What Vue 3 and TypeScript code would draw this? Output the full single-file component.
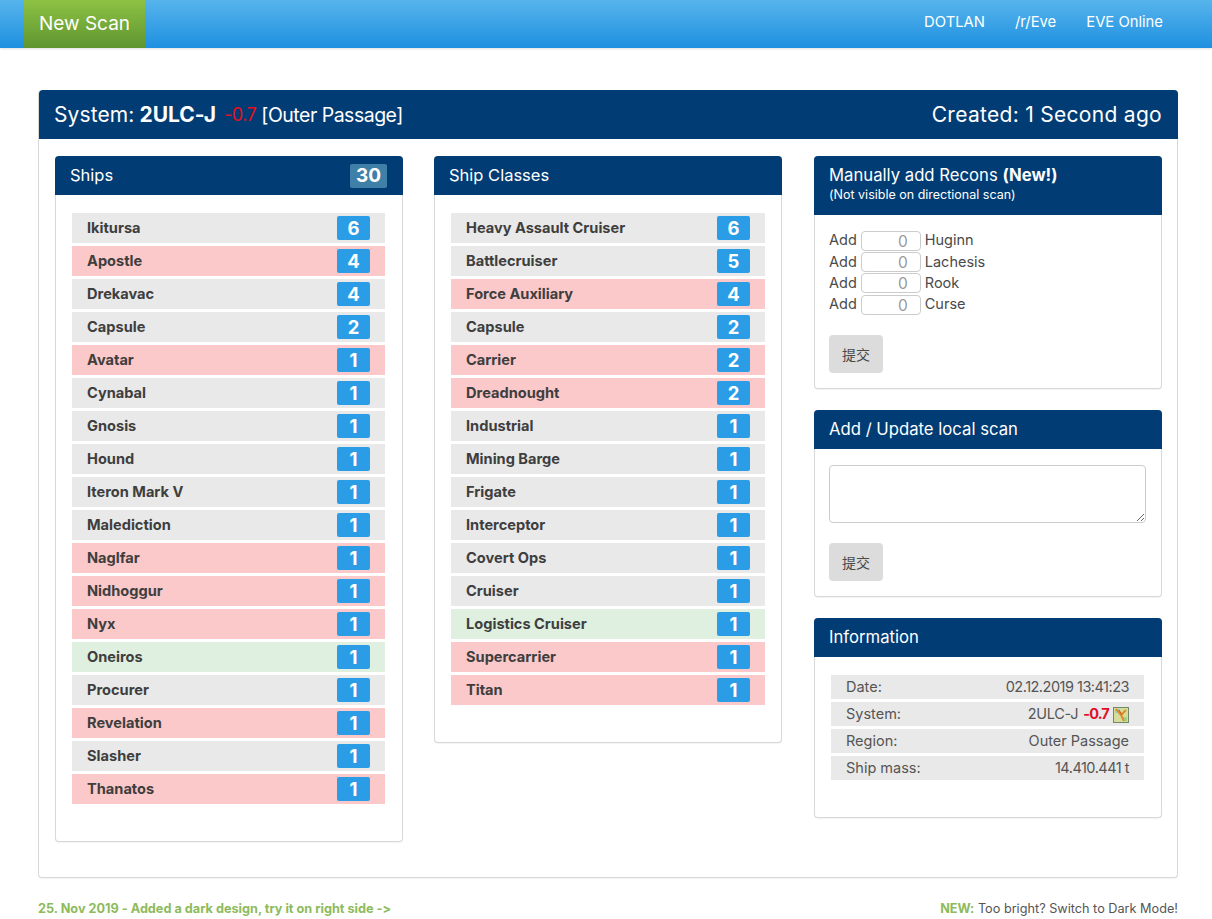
<script setup lang="ts">
type Row = { name: string; count: number; tone?: 'red' | 'green' }

const ships: Row[] = [
  { name: 'Ikitursa', count: 6 },
  { name: 'Apostle', count: 4, tone: 'red' },
  { name: 'Drekavac', count: 4 },
  { name: 'Capsule', count: 2 },
  { name: 'Avatar', count: 1, tone: 'red' },
  { name: 'Cynabal', count: 1 },
  { name: 'Gnosis', count: 1 },
  { name: 'Hound', count: 1 },
  { name: 'Iteron Mark V', count: 1 },
  { name: 'Malediction', count: 1 },
  { name: 'Naglfar', count: 1, tone: 'red' },
  { name: 'Nidhoggur', count: 1, tone: 'red' },
  { name: 'Nyx', count: 1, tone: 'red' },
  { name: 'Oneiros', count: 1, tone: 'green' },
  { name: 'Procurer', count: 1 },
  { name: 'Revelation', count: 1, tone: 'red' },
  { name: 'Slasher', count: 1 },
  { name: 'Thanatos', count: 1, tone: 'red' },
]

const classes: Row[] = [
  { name: 'Heavy Assault Cruiser', count: 6 },
  { name: 'Battlecruiser', count: 5 },
  { name: 'Force Auxiliary', count: 4, tone: 'red' },
  { name: 'Capsule', count: 2 },
  { name: 'Carrier', count: 2, tone: 'red' },
  { name: 'Dreadnought', count: 2, tone: 'red' },
  { name: 'Industrial', count: 1 },
  { name: 'Mining Barge', count: 1 },
  { name: 'Frigate', count: 1 },
  { name: 'Interceptor', count: 1 },
  { name: 'Covert Ops', count: 1 },
  { name: 'Cruiser', count: 1 },
  { name: 'Logistics Cruiser', count: 1, tone: 'green' },
  { name: 'Supercarrier', count: 1, tone: 'red' },
  { name: 'Titan', count: 1, tone: 'red' },
]

const recons = ['Huginn', 'Lachesis', 'Rook', 'Curse']
const navLinks = ['DOTLAN', '/r/Eve', 'EVE Online']
</script>

<template>
  <div class="page">
    <nav class="navbar">
      <a class="new-scan">New Scan</a>
      <div class="nav-links">
        <a v-for="l in navLinks" :key="l">{{ l }}</a>
      </div>
    </nav>

    <section class="main">
      <header class="main-head">
        <div class="title">
          <span class="t-sys">System:</span>
          <b>2ULC-J</b>
          <span class="t-sec">-0.7</span>
          <span class="t-region">[Outer Passage]</span>
        </div>
        <div class="created">Created: 1 Second ago</div>
      </header>

      <div class="columns">
        <div class="panel ships">
          <div class="panel-head">
            <span>Ships</span>
            <span class="total">30</span>
          </div>
          <ul class="list">
            <li v-for="r in ships" :key="r.name" :class="r.tone">
              <span>{{ r.name }}</span>
              <span class="badge">{{ r.count }}</span>
            </li>
          </ul>
        </div>

        <div class="panel classes">
          <div class="panel-head">
            <span>Ship Classes</span>
          </div>
          <ul class="list">
            <li v-for="r in classes" :key="r.name" :class="r.tone">
              <span>{{ r.name }}</span>
              <span class="badge">{{ r.count }}</span>
            </li>
          </ul>
        </div>

        <div class="side">
          <div class="panel">
            <div class="panel-head tall">
              <div>Manually add Recons <b>(New!)</b></div>
              <small>(Not visible on directional scan)</small>
            </div>
            <div class="recon-body">
              <div class="recon-rows">
                <div v-for="r in recons" :key="r" class="recon">
                  <span>Add</span>
                  <input class="num" placeholder="0" />
                  <span>{{ r }}</span>
                </div>
              </div>
              <button class="submit">提交</button>
            </div>
          </div>

          <div class="panel">
            <div class="panel-head">
              <span>Add / Update local scan</span>
            </div>
            <div class="local-body">
              <textarea class="area"></textarea>
              <button class="submit">提交</button>
            </div>
          </div>

          <div class="panel">
            <div class="panel-head">
              <span>Information</span>
            </div>
            <div class="info-body">
              <div class="info"><span>Date:</span><span class="digits">02.12.2019 13:41:23</span></div>
              <div class="info">
                <span>System:</span>
                <span class="sys"><span class="sys-name">2ULC-J</span> <b class="sec">-0.7</b>
                  <svg class="map" width="16" height="16" viewBox="0 0 16 16">
                    <rect x="0.5" y="0.5" width="15" height="15" fill="#d8dc9a" stroke="#6f8a6a" />
                    <path d="M2 2h5v4H2z" fill="#9ecbd8" />
                    <path d="M10 10h4v4h-4z" fill="#a7cf8a" />
                    <path d="M3 2l5 6 3 6M8 8l5-5" stroke="#d9902a" stroke-width="2" fill="none" />
                    <path d="M6 3l3 5" stroke="#c8502c" stroke-width="1" fill="none" />
                  </svg>
                </span>
              </div>
              <div class="info"><span>Region:</span><span>Outer Passage</span></div>
              <div class="info"><span>Ship mass:</span><span class="digits">14.410.441 t</span></div>
            </div>
          </div>
        </div>
      </div>
    </section>

    <footer class="foot">
      <span class="foot-left">25. Nov 2019 - Added a dark design, try it on right side -&gt;</span>
      <span class="foot-right"><b>NEW:</b> Too bright? Switch to Dark Mode!</span>
    </footer>
  </div>
</template>

<style>
html, body { background: #fff; }
</style>

<style scoped>
.page {
  font-family: "Inter", "Noto Sans CJK SC", sans-serif;
  font-feature-settings: "calt" 0;
  color: #4a4a4a;
  font-size: 15px;
  height: 919px;
  overflow: hidden;
}
.navbar {
  height: 48px;
  display: flex;
  justify-content: space-between;
  padding: 0 49px 0 24px;
  background: linear-gradient(#57b4ec, #1e90e0);
  box-shadow: 0 1px 2px rgba(0,0,0,.12);
}
.new-scan {
  width: 121px;
  display: flex;
  align-items: center;
  justify-content: center;
  padding-bottom: 2px;
  box-sizing: border-box;
  color: #fff;
  font-size: 19px;
  background: linear-gradient(#8dc244, #5f9530);
}
.nav-links { display: flex; align-items: center; gap: 30px; padding-bottom: 4px; color: #fff; font-size: 14.8px; }
.main {
  margin: 42px 34px 0 38px;
  height: 788px;
  box-sizing: border-box;
  border: 1px solid #d8d8d8;
  border-top: 0;
  border-radius: 4px;
  box-shadow: 0 1px 1px rgba(0,0,0,.05);
}
.main-head {
  height: 49px;
  margin: 0 -1px 0 0;
  padding: 0 16px 0 15px;
  display: flex;
  align-items: center;
  justify-content: space-between;
  background: #023c74;
  color: #fff;
  font-size: 21px;
  border-radius: 4px 4px 0 0;
}
.title { display: flex; align-items: center; }
.title b { font-weight: 700; margin-left: 5px; }
.t-sys { letter-spacing: .1px; }
.t-sec { color: #e2101f; font-size: 18px; letter-spacing: -.5px; margin-left: 8px; }
.t-region { font-size: 19.5px; letter-spacing: -.5px; margin-left: 5px; }
.created { letter-spacing: .3px; }
.sec { color: #e0102a; }
.columns {
  display: grid;
  grid-template-columns: 379px 380px 348px;
  padding: 17px 16px 0;
  align-items: start;
}
.panel {
  border: 1px solid #d8d8d8;
  border-top: 0;
  border-radius: 4px;
  box-shadow: 0 1px 1px rgba(0,0,0,.05);
  background: #fff;
  box-sizing: border-box;
}
.ships, .classes { width: 348px; }
.panel-head {
  height: 39px;
  margin: 0 -1px;
  padding: 0 16px 0 15px;
  display: flex;
  align-items: center;
  justify-content: space-between;
  background: #023c74;
  color: #fff;
  font-size: 16.5px;
  border-radius: 4px 4px 0 0;
}
.panel-head > span:first-child { margin-bottom: 2px; }
.side .panel-head { font-size: 16.7px; }
.panel-head.tall {
  height: 59px;
  padding-bottom: 4px;
  box-sizing: border-box;
  flex-direction: column;
  align-items: flex-start;
  justify-content: center;
  gap: 2px;
}
.panel-head small { font-size: 12.5px; }
.total {
  width: 37px;
  height: 24px;
  display: flex;
  align-items: center;
  justify-content: center;
  background: #3f80a8;
  font-weight: 700;
  font-size: 19px;
  border-radius: 2px;
}
.ships { height: 686px; }
.classes { height: 587px; }
.list {
  list-style: none;
  margin: 0;
  padding: 18px 17px 0 16px;
  display: flex;
  flex-direction: column;
  gap: 3px;
}
.classes .list { padding-right: 16px; }
.list li {
  height: 30px;
  padding: 0 15px;
  display: flex;
  align-items: center;
  justify-content: space-between;
  background: #e9e9e9;
  font-weight: 700;
  font-size: 14.6px;
  color: #3e3e3e;
}
.list li > span:first-child { margin-bottom: 1px; }
.list li.red { background: #fbc9c9; }
.list li.green { background: #dff0e0; }
.badge {
  width: 33px;
  height: 24px;
  display: flex;
  align-items: center;
  justify-content: center;
  background: #2a9de6;
  color: #fff;
  font-size: 18.5px;
  font-weight: 700;
  border-radius: 2px;
}
.side { display: flex; flex-direction: column; gap: 21px; }
.recon-body { padding: 15px 15px 15px 14px; height: 173px; box-sizing: border-box; }
.recon-rows { display: flex; flex-direction: column; }
.recon { height: 21.4px; display: flex; align-items: center; gap: 4px; font-size: 14.5px; }
.recon > span { margin-bottom: 2px; }
.num {
  width: 60px;
  height: 20px;
  box-sizing: border-box;
  border: 1px solid #ccc;
  border-radius: 4px;
  text-align: right;
  font: inherit;
  font-size: 15.5px;
  padding: 1px 12px 0 0;
  background: #fff;
}
.num::placeholder { color: #999; }
.submit {
  display: block;
  margin-top: 19.4px;
  width: 54px;
  height: 38px;
  border: 0;
  border-radius: 4px;
  background: #dcdcdc;
  color: #4a4a4a;
  font: 14px "Noto Sans CJK SC", sans-serif;
  padding: 0;
}
.local-body { padding: 16px 15px 15px 14px; height: 147px; box-sizing: border-box; }
.local-body .submit { margin-top: 20px; }
.area {
  display: block;
  width: 100%;
  height: 58px;
  box-sizing: border-box;
  border: 1px solid #ccc;
  border-radius: 4px;
}
.info-body { padding: 18px 17px 0 16px; height: 160px; box-sizing: border-box; display: flex; flex-direction: column; gap: 3px; }
.info {
  height: 24px;
  padding: 0 15px;
  display: flex;
  align-items: center;
  justify-content: space-between;
  background: #e9e9e9;
  font-size: 14.5px;
  color: #555;
}
.info > span { margin-bottom: 1px; }
.digits { letter-spacing: -.5px; }
.sys { display: inline-flex; align-items: center; gap: 4px; }
.sys-name { letter-spacing: -.3px; }
.sys .sec { letter-spacing: -.8px; margin-left: 1px; }
.map { margin-top: 3px; }
.foot {
  display: flex;
  justify-content: space-between;
  margin: 23px 34px 0 38px;
  font-size: 12.7px;
  color: #555;
}
.foot-left, .foot-right b { color: #8dbb5c; font-weight: 700; }
</style>
